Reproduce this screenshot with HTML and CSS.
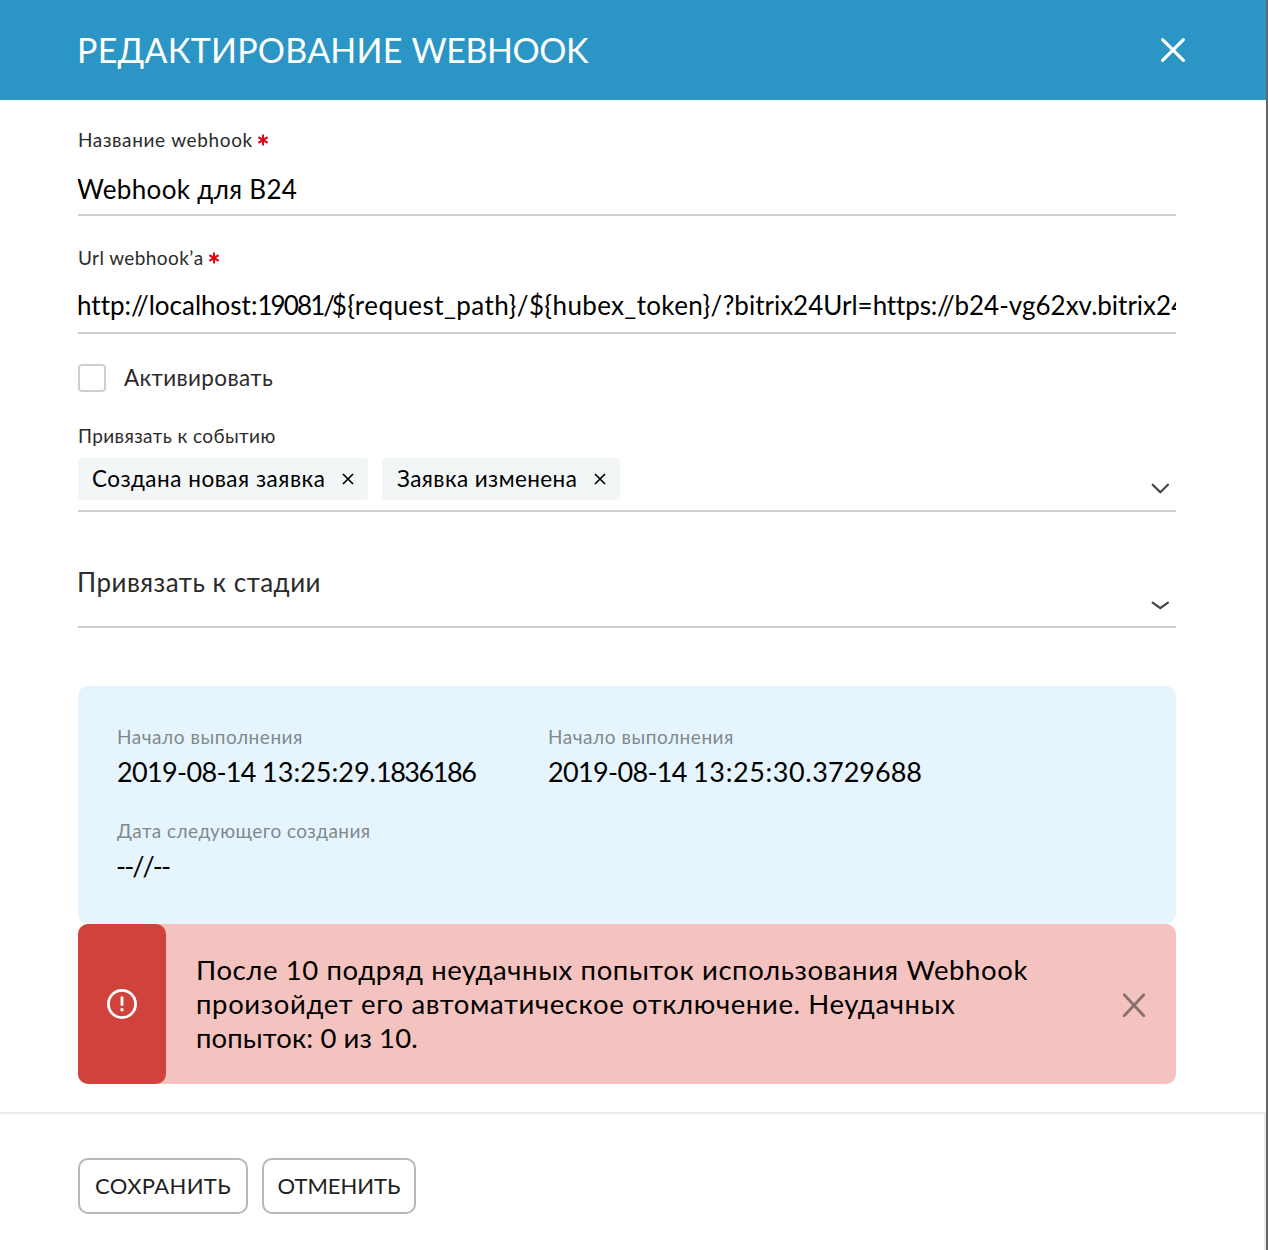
FILE: index.html
```html
<!DOCTYPE html>
<html lang="ru">
<head>
<meta charset="utf-8">
<title>Редактирование webhook</title>
<link rel="stylesheet" href="styles.css">
</head>
<body>
<div class="modal">
  <header class="modal-header">
    <h1 class="title"><span class="t-title1">РЕДАКТИРОВАНИЕ </span><span class="t-title2">WEBHOOK</span></h1>
    <svg class="close" width="26" height="26" viewBox="0 0 26 26"><path d="M2.6 2.6 23.4 23.4M23.4 2.6 2.6 23.4"/></svg>
  </header>
  <main class="content">
    <div class="field field-name">
      <label class="label"><span class="t-name">Название webhook</span><svg class="star" width="10" height="12" viewBox="0 0 10 12"><path d="M5 .4v11.2M.4 3.2l9.2 5.6M9.6 3.2.4 8.8"/></svg></label>
      <div class="value"><span class="t-val">Webhook для B24</span></div>
    </div>
    <div class="field field-url">
      <label class="label"><span class="t-urllabel">Url webhook’а</span><svg class="star" width="10" height="12" viewBox="0 0 10 12"><path d="M5 .4v11.2M.4 3.2l9.2 5.6M9.6 3.2.4 8.8"/></svg></label>
      <div class="value"><span class="u1">http://localhost:</span><span class="u2">19081/</span><span class="u3">${request_path}/</span><span class="u4">${hubex_token}/</span><span class="u5">?bitrix24Url=</span><span class="u6">https://</span><span class="u7">b24-vg62xv.bitrix24</span></div>
    </div>
    <div class="check-row"><span class="checkbox"></span><span class="t-check">Активировать</span></div>
    <div class="field field-event">
      <label class="label"><span class="t-event">Привязать к событию</span></label>
      <div class="chips">
        <span class="chip chip-new"><span class="t-chip1">Создана новая заявка</span><svg width="12" height="12" viewBox="0 0 12 12"><path d="M1 1l10 10M11 1 1 11"/></svg></span>
        <span class="chip chip-edit"><span class="t-chip2">Заявка изменена</span><svg width="12" height="12" viewBox="0 0 12 12"><path d="M1 1l10 10M11 1 1 11"/></svg></span>
        <svg class="chevron" width="18" height="11" viewBox="0 0 18 11"><path d="M1.7 1.7 9.3 9.2 16.9 1.7"/></svg>
      </div>
    </div>
    <div class="field field-stage">
      <span class="t-stage">Привязать к стадии</span>
      <svg class="chevron" width="18" height="9" viewBox="0 0 18 9"><path d="M1.7 1.7 9.3 7.2l7.6-5.5"/></svg>
    </div>
    <section class="info">
      <div class="info-item"><div class="info-label"><span class="t-start">Начало выполнения</span></div><div class="info-value"><span class="d-date">2019-08-14 </span><span class="d-time1">13:25:29.</span><span class="d-frac1">1836186</span></div></div>
      <div class="info-item"><div class="info-label"><span class="t-start">Начало выполнения</span></div><div class="info-value"><span class="d-date">2019-08-14 </span><span class="d-time2">13:25:30.</span><span class="d-frac2">3729688</span></div></div>
      <div class="info-item"><div class="info-label"><span class="t-next">Дата следующего создания</span></div><div class="info-value"><span class="t-none">--//--</span></div></div>
    </section>
    <section class="alert">
      <div class="alert-icon"><svg width="30" height="30" viewBox="0 0 30 30"><circle cx="15" cy="15" r="13.6"/><path d="M15 7.5v9.2M15 19.2v3"/></svg></div>
      <p class="alert-text"><span class="t-a1">После 10 подряд неудачных попыток использования Webhook</span><br><span class="t-a2">произойдет его автоматическое отключение. Неудачных</span><br><span class="t-a3">попыток: 0 из 10.</span></p>
      <svg class="alert-close" width="24" height="24" viewBox="0 0 24 24"><path d="M2.2 1.8l19.6 21M21.8 1.8 2.2 22.8"/></svg>
    </section>
  </main>
  <footer class="actions">
    <button class="btn btn-save">СОХРАНИТЬ</button>
    <button class="btn btn-cancel">ОТМЕНИТЬ</button>
  </footer>
</div>
</body>
</html>
```

FILE: styles.css
```css
* { box-sizing: border-box; }
body { margin: 0; height: 1250px; background: #656565; overflow: hidden; font-family: Lato, Inter, sans-serif; font-variant-ligatures: none; color: #000; }
svg { flex: none; fill: none; stroke-linecap: round; }
.modal { width: 1266px; height: 1250px; background: #fff; display: flex; flex-direction: column; }
.modal-header { height: 100px; flex: none; background: #2b95c5; color: #fff; display: flex; align-items: center; justify-content: space-between; padding: 0 80px 0 77px; }
.title { margin: 0; font-size: 34px; font-weight: 400; line-height: 40px; }
.t-title1 { letter-spacing: .22px; }
.t-title2 { letter-spacing: -.45px; }
.close { stroke: #fff; stroke-width: 3.2; }
.content { height: 1012px; flex: none; padding: 0 90px 0 78px; display: flex; flex-direction: column; white-space: nowrap; }
.field { border-bottom: 2px solid #cfcfcf; flex: none; }
.label { display: flex; align-items: center; height: 24px; font-size: 19px; line-height: 24px; color: #2b2b2b; gap: 5px; }
.star { stroke: #e0071b; stroke-width: 2.1; stroke-linecap: butt; }
.t-name { letter-spacing: .62px; }
.t-val { letter-spacing: .33px; margin-left: -1px; }
.t-urllabel { letter-spacing: .4px; }
.value { font-size: 26px; line-height: 36px; overflow: hidden; }
.field-name { height: 116px; padding-top: 28px; }
.field-name .value { margin-top: 19px; }
.field-url { height: 118px; padding-top: 30px; }
.field-url .value { margin-top: 17px; }
.u1 { margin-left: -1px; }
.u2 { letter-spacing: -1.9px; margin-right: -1.5px; }
.u3 { letter-spacing: .43px; }
.u4 { letter-spacing: .35px; }
.u6 { letter-spacing: -.15px; }
.check-row { display: flex; align-items: center; height: 28px; margin-top: 30px; gap: 18px; font-size: 22.5px; color: #2b2b2b; }
.t-check { letter-spacing: .35px; margin-top: -2px; }
.checkbox { width: 28px; height: 28px; border: 2px solid #cfcfcf; border-radius: 4px; }
.field-event { margin-top: 32px; height: 88px; }
.t-event { letter-spacing: .4px; }
.chips { display: flex; height: 42px; margin-top: 10px; gap: 14px; padding-right: 7px; }
.chip { display: flex; align-items: center; justify-content: space-between; height: 42px; padding: 0 14px; background: #f2f6f7; border-radius: 4px; font-size: 22.5px; line-height: 26px; }
.chip svg { stroke: #000; stroke-width: 1.7; stroke-linecap: butt; }
.t-chip1 { letter-spacing: .52px; }
.t-chip2 { letter-spacing: .42px; }
.chip-new { width: 290px; }
.chip-edit { width: 238px; padding-left: 15px; }
.chevron { stroke: #444; stroke-width: 2.2; margin-left: auto; }
.chips .chevron { margin-top: 25px; }
.field-stage { height: 116px; display: flex; padding: 52px 7px 0 0; font-size: 26px; line-height: 36px; color: #2b2b2b; }
.t-stage { letter-spacing: .5px; margin-left: -1px; }
.field-stage .chevron { margin-top: 37px; }
.info { margin-top: 58px; height: 238px; flex: none; background: #e6f5fd; border-radius: 10px; padding: 39px 39px 0; display: grid; grid-template-columns: 431px 1fr; grid-auto-rows: 94px; }
.info-label { font-size: 19px; line-height: 24px; color: #81888c; }
.t-start { letter-spacing: .54px; }
.t-next { letter-spacing: .42px; }
.info-value { font-size: 27px; line-height: 36px; margin-top: 5px; }
.d-date { letter-spacing: -.65px; }
.d-time2 { letter-spacing: .6px; }
.d-frac1 { letter-spacing: -1.45px; }
.t-none { font-kerning: none; letter-spacing: -1.9px; margin-left: -1px; }
.alert { height: 160px; flex: none; background: #f4c3bf; border-radius: 10px; display: flex; align-items: center; padding-right: 30px; }
.alert-icon { width: 88px; height: 160px; border-radius: 10px; background: #d0433c; display: flex; align-items: center; justify-content: center; }
.alert-icon svg { stroke: #fff; stroke-width: 2.8; stroke-linecap: butt; }
.alert-text { margin: -1px auto 0 30px; font-size: 27.5px; line-height: 34px; }
.t-a1 { letter-spacing: .6px; }
.t-a2 { letter-spacing: .63px; }
.t-a3 { letter-spacing: .1px; }
.alert-close { stroke: #89706e; stroke-width: 2.8; margin-top: 2px; }
.actions { flex: 1; border-top: 2px solid #ebebeb; border-right: 2px solid #ebebeb; padding: 44px 78px 0; display: flex; gap: 14px; }
.btn { height: 56px; padding: 0; border: 2px solid #b7b7b7; border-radius: 10px; background: #fff; font: 400 22px/30px Lato, Inter, sans-serif; color: #222; white-space: nowrap; }
.btn-save { width: 170px; letter-spacing: .35px; }
.btn-cancel { width: 154px; }
```
